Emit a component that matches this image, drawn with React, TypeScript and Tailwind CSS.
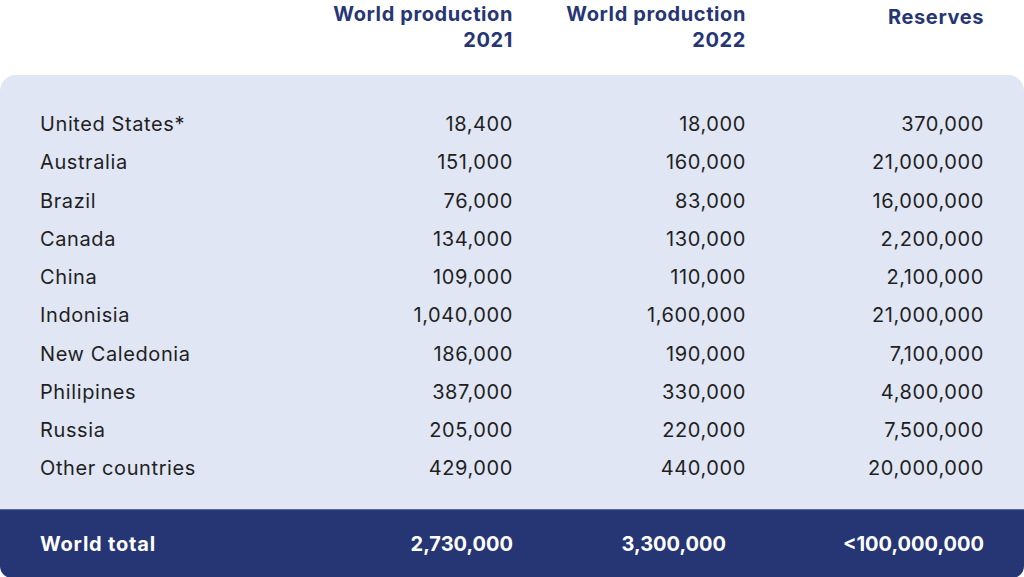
const rows: [string, string, string, string][] = [
  ["United States*", "18,400", "18,000", "370,000"],
  ["Australia", "151,000", "160,000", "21,000,000"],
  ["Brazil", "76,000", "83,000", "16,000,000"],
  ["Canada", "134,000", "130,000", "2,200,000"],
  ["China", "109,000", "110,000", "2,100,000"],
  ["Indonisia", "1,040,000", "1,600,000", "21,000,000"],
  ["New Caledonia", "186,000", "190,000", "7,100,000"],
  ["Philipines", "387,000", "330,000", "4,800,000"],
  ["Russia", "205,000", "220,000", "7,500,000"],
  ["Other countries", "429,000", "440,000", "20,000,000"],
];

const cols = "grid grid-cols-[240px_233px_233px_238px]";

export default function App() {
  return (
    <div
      className="w-[1024px] h-[577px] bg-white overflow-hidden"
      style={{ fontFamily: "Inter, 'Noto Sans', sans-serif" }}
    >
      {/* Header */}
      <div className={`${cols} px-10 pt-[1px] h-[75px] text-[20px] leading-[26px] font-bold text-[#263574] tracking-[0.6px]`}>
        <div />
        <div className="text-right">
          World production
          <br />
          2021
        </div>
        <div className="text-right">
          World production
          <br />
          2022
        </div>
        <div className="text-right pt-[3px]">Reserves</div>
      </div>

      {/* Body */}
      <div className="bg-[#e1e6f4] rounded-t-[16px] pt-[30px] pb-[21px] px-10">
        {rows.map((r) => (
          <div key={r[0]} className={`${cols} h-[38.25px] leading-[38.25px] text-[20px] text-[#1f1f1f] tracking-[0.6px]`}>
            <div>{r[0]}</div>
            <div className="text-right">{r[1]}</div>
            <div className="text-right">{r[2]}</div>
            <div className="text-right">{r[3]}</div>
          </div>
        ))}
      </div>

      {/* Footer */}
      <div className={`${cols} px-10 h-[69px] items-center bg-[#263574] rounded-b-[12px] border-t border-[#5b6a9e] text-[20px] font-bold text-white`}>
        <div className="tracking-[0.8px]">World total</div>
        <div className="text-right">2,730,000</div>
        <div className="text-right pr-5">3,300,000</div>
        <div className="text-right">&lt;100,000,000</div>
      </div>
    </div>
  );
}
